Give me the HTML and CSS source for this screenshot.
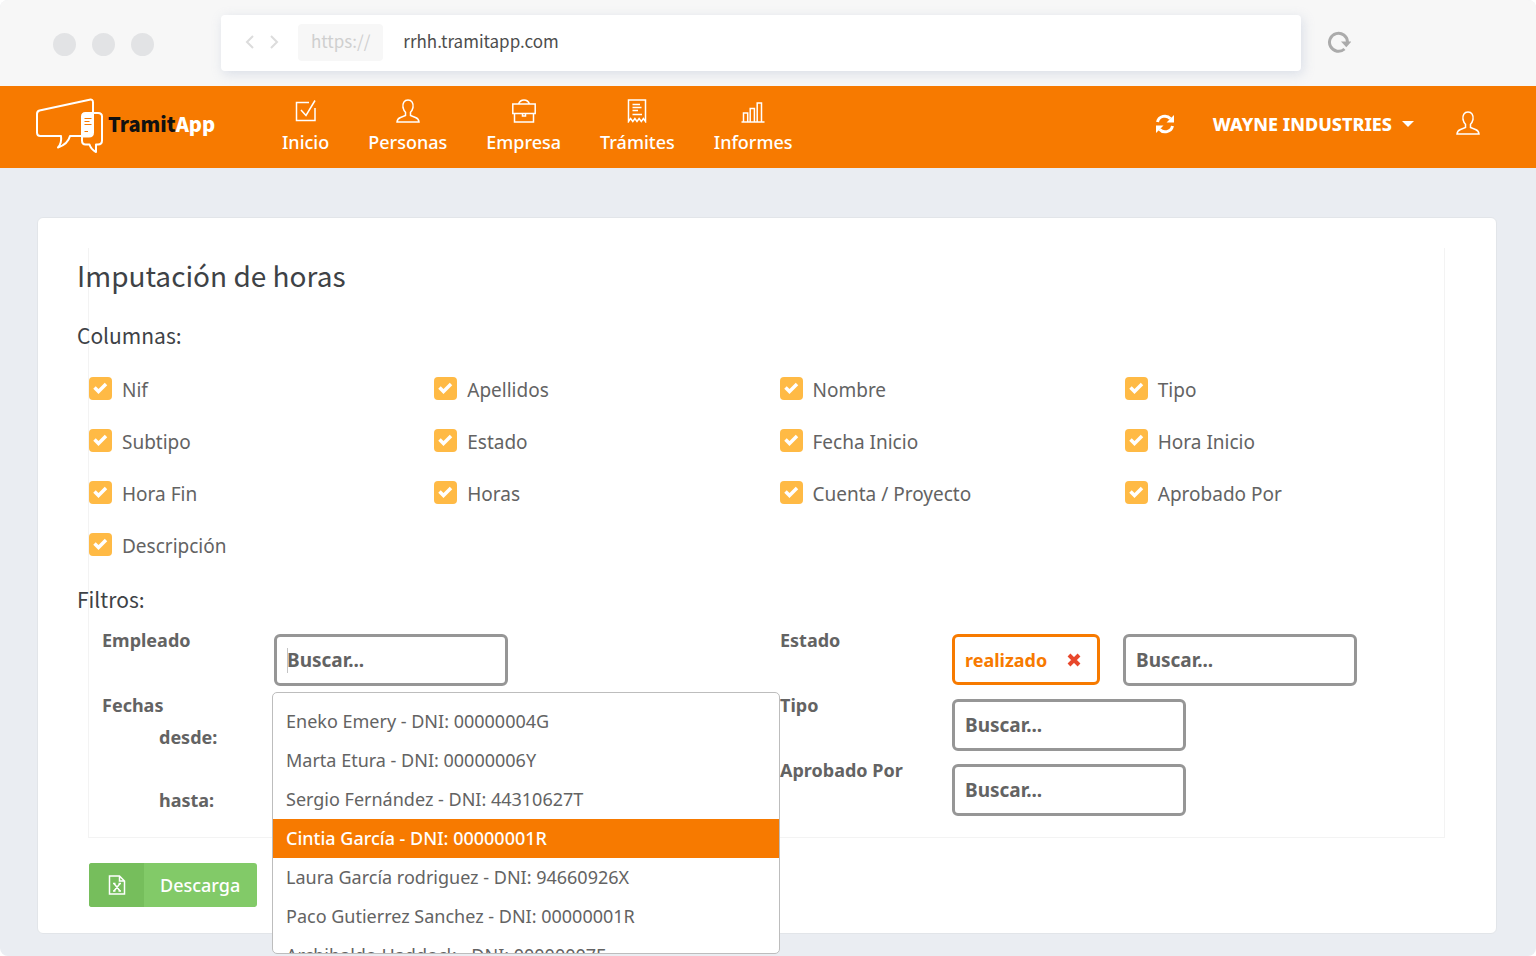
FILE: index.html
```html
<!DOCTYPE html>
<html lang="es">
<head>
    <meta charset="UTF-8">
    <meta name="viewport" content="width=device-width, initial-scale=1.0">
    <title>TramitApp - Imputación de horas</title>
    <link rel="stylesheet" href="styles.css">
</head>
<body>

<div class="page">
    <div class="browser">
        <div class="dots"><span></span><span></span><span></span></div>
        <div class="address">
            <svg class="arrows" viewBox="0 0 34 14"><path d="M8 1L2 7l6 6M26 1l6 6-6 6"/></svg>
            <span class="protocol">https://</span>
            <span class="url">rrhh.tramitapp.com</span>
        </div>
        <svg class="reload" viewBox="0 0 24 24"><path class="ring" d="M17.500 19A9 9 0 1 1 20.500 12"/><path class="tip" d="M14 11.500h10.500l-5.200 5.800z"/></svg>
    </div>

    <header class="navbar">
        <a href="#" class="logo">
            <svg viewBox="0 0 68 56">
                <path d="M58 14V4.500Q58 1 54.500 1.700L4.500 12.500Q2 13.200 2 16V34.500Q2 38 5.500 38H26Q27 45 23 49.500Q33 46 35 38H47"/>
                <path class="fill" d="M50.500 15H58V34.500Q58 38.500 54 38.500H47V18.500Q47 15 50.500 15z"/>
                <path d="M58 15H63Q67 15 67 18.500V42.500Q67 46.500 63 46.500H61V54Q56 51.500 54.500 46.500H50.500Q47 46.500 47 42.500V38"/>
                <path class="lines" d="M49.500 20.500H56.500M49.500 23.500H54.500M49.500 26.500H56.500M49.500 33.500H53"/>
            </svg>
            <span class="brand">Tramit<b>App</b></span>
        </a>
        <nav class="menu">
            <a href="#">
                <svg viewBox="0 0 24 24"><path d="M15 3.500H2.500v18h18.500V9M7 11l5 5.500L21 1.500"/></svg>
                Inicio
            </a>
            <a href="#">
                <svg viewBox="0 0 24 24"><path d="M9.500 16.500v-3.200C8 12 7.500 10.500 7 8.500c-.6-4.500 1.200-7.500 5-7.500S17.600 4 17 8.500c-.5 2-1 3.500-2.500 4.800v3.200l5 2c2.500 1 3.300 2 3.500 4.500H1c.2-2.500 1-3.500 3.500-4.500z"/></svg>
                Personas
            </a>
            <a href="#">
                <svg viewBox="0 0 24 24"><path d="M.8 5h22.400v9.500H.8zM2.500 14.500V23h19v-8.500M6.500 5Q8 1 12 1t5.500 4M10.500 15v2h3v-2"/></svg>
                Empresa
            </a>
            <a href="#">
                <svg viewBox="0 0 24 24"><path d="M3.500 22.500V1h17v21.500l-2.100-3-2.100 3-2.200-3-2.100 3-2.100-3-2.100 3-2.200-3zM7.500 5.500H15M7.500 8.500h9M7.500 11.500H13M7.500 15.500H17"/></svg>
                Trámites
            </a>
            <a href="#">
                <svg viewBox="0 0 24 24"><path d="M.5 23h23M2.500 23v-9h4.200v9M9.200 23V9.500h4.200V23M16.200 23V4h4.300v19"/></svg>
                Informes
            </a>
        </nav>
        <div class="account">
            <button type="button" class="sync" aria-label="Actualizar">
                <svg viewBox="0 0 20 20"><path class="arc" d="M2.500 8A7.500 7.500 0 0 1 15.500 4.800M17.500 12A7.500 7.500 0 0 1 4.500 15.200"/><path class="heads" d="M19 1v7.500h-7.500zM1 19v-7.500h7.500z"/></svg>
            </button>
            <button type="button" class="company">WAYNE INDUSTRIES</button>
            <button type="button" class="user" aria-label="Perfil">
                <svg viewBox="0 0 24 24"><path d="M9.500 16.500v-3.200C8 12 7.500 10.500 7 8.500c-.6-4.500 1.200-7.500 5-7.500S17.600 4 17 8.500c-.5 2-1 3.500-2.500 4.800v3.200l5 2c2.500 1 3.300 2 3.500 4.500H1c.2-2.500 1-3.500 3.500-4.500z"/></svg>
            </button>
        </div>
    </header>

    <main class="card">
        <form>
            <div class="panel">
                <h1>Imputación de horas</h1>

                <h2>Columnas:</h2>
                <div class="columns">
                    <label><input type="checkbox" checked>Nif</label>
                    <label><input type="checkbox" checked>Apellidos</label>
                    <label><input type="checkbox" checked>Nombre</label>
                    <label><input type="checkbox" checked>Tipo</label>
                    <label><input type="checkbox" checked>Subtipo</label>
                    <label><input type="checkbox" checked>Estado</label>
                    <label><input type="checkbox" checked>Fecha Inicio</label>
                    <label><input type="checkbox" checked>Hora Inicio</label>
                    <label><input type="checkbox" checked>Hora Fin</label>
                    <label><input type="checkbox" checked>Horas</label>
                    <label><input type="checkbox" checked>Cuenta / Proyecto</label>
                    <label><input type="checkbox" checked>Aprobado Por</label>
                    <label><input type="checkbox" checked>Descripción</label>
                </div>

                <h2>Filtros:</h2>
                <div class="filters">
                    <div class="left">
                        <div class="filter">
                            <label for="empleado">Empleado</label>
                            <div class="control search">
                                <input type="text" id="empleado" class="box" placeholder="Buscar...">
                                <ul class="results" role="listbox" aria-label="Empleados">
                                    <li role="option">Eneko Emery - DNI: 00000004G</li>
                                    <li role="option">Marta Etura - DNI: 00000006Y</li>
                                    <li role="option">Sergio Fernández - DNI: 44310627T</li>
                                    <li role="option" class="active" aria-selected="true">Cintia García - DNI: 00000001R</li>
                                    <li role="option">Laura García rodriguez - DNI: 94660926X</li>
                                    <li role="option">Paco Gutierrez Sanchez - DNI: 00000001R</li>
                                    <li role="option">Archibaldo Haddock - DNI: 00000007F</li>
                                </ul>
                            </div>
                        </div>
                        <p class="group">Fechas</p>
                        <div class="date">
                            <label for="desde">desde:</label>
                            <input type="text" id="desde">
                        </div>
                        <div class="date">
                            <label for="hasta">hasta:</label>
                            <input type="text" id="hasta">
                        </div>
                    </div>
                    <div class="right">
                        <div class="filter">
                            <label for="estado">Estado</label>
                            <div class="control">
                                <span class="tag">realizado
                                    <button type="button" aria-label="Quitar"><svg viewBox="0 0 14 14"><path d="M2 2l10 10M12 2L2 12"/></svg></button>
                                </span>
                                <input type="text" id="estado" class="box" placeholder="Buscar...">
                            </div>
                        </div>
                        <div class="filter">
                            <label for="tipo">Tipo</label>
                            <div class="control">
                                <input type="text" id="tipo" class="box" placeholder="Buscar...">
                            </div>
                        </div>
                        <div class="filter">
                            <label for="aprobado">Aprobado Por</label>
                            <div class="control">
                                <input type="text" id="aprobado" class="box" placeholder="Buscar...">
                            </div>
                        </div>
                    </div>
                </div>
            </div>

            <button type="button" class="download">
                <span class="download-icon">
                    <svg viewBox="0 0 18 20"><path d="M1.500 1h10l5 5v13h-15zM11.500 1v5h5M6 8.500l6 7.500M12 8.500L6 16M5 8.500h2.500M10.500 8.500H13M5 16h2.500M10.500 16H13"/></svg>
                </span>
                <span class="download-text">Descarga</span>
            </button>
        </form>
    </main>
</div>

</body>
</html>
```

FILE: styles.css
```css
* {
    margin: 0;
    padding: 0;
    box-sizing: border-box;
}

body {
    background: #fff;
    color: #636363;
    font-family: 'Noto Sans', 'Open Sans', sans-serif;
    font-size: 18px;
    line-height: 26px;
}

button,
input {
    font: inherit;
    border: 0;
    outline: 0;
    background: transparent;
}

button {
    cursor: pointer;
}

a {
    color: inherit;
    text-decoration: none;
}

svg {
    display: block;
    fill: none;
}

.page {
    min-height: 100vh;
    background: #eaedf2;
    border-radius: 8px;
    overflow: hidden;
}

/* browser bar */
.browser {
    display: flex;
    align-items: center;
    height: 86px;
    padding: 0 185px 0 53px;
    background: #f7f7f7;
}

.dots {
    display: flex;
    gap: 16px;
    margin-right: 67px;
    padding-top: 2px;
}

.dots span {
    width: 23px;
    height: 23px;
    border-radius: 50%;
    background: #e2e3e5;
}

.address {
    flex: 1;
    display: flex;
    align-items: center;
    height: 56px;
    padding: 0 0 2px 24px;
    border-radius: 4px;
    background: #fff;
    box-shadow: 2px 3px 12px rgba(150, 165, 195, 0.3);
    font-family: 'Noto Sans CJK SC', sans-serif;
    font-size: 17px;
}

.arrows {
    width: 34px;
    height: 14px;
    margin-right: 19px;
    stroke: #dcdcdc;
    stroke-width: 2;
}

.protocol {
    padding: 4px 13px 7px;
    margin-right: 20px;
    border-radius: 4px;
    background: #f7f7f7;
    color: #cfcfcf;
}

.url {
    padding-bottom: 3px;
    color: #4d4d4d;
}

.reload {
    width: 24px;
    height: 24px;
    margin: 0 0 2px 26px;
}

.reload .ring {
    stroke: #ababab;
    stroke-width: 3;
}

.reload .tip {
    fill: #ababab;
}

/* navbar */
.navbar {
    display: flex;
    align-items: center;
    height: 82px;
    padding: 0 56px 0 35px;
    background: #f77a00;
    color: #fff;
}

.logo {
    display: flex;
    align-items: center;
    gap: 5px;
    width: 247px;
    padding-bottom: 2px;
}

.logo svg {
    width: 68px;
    height: 56px;
    stroke: #fff;
    stroke-width: 2;
    stroke-linejoin: round;
}

.logo .fill {
    fill: #fff;
}

.logo .lines {
    stroke: #f77a00;
    stroke-width: 1;
}

.brand {
    padding-bottom: 4px;
    font-family: 'Noto Sans CJK SC', sans-serif;
    font-size: 20px;
    font-weight: 900;
    color: #111;
}

.brand b {
    font-weight: 900;
    color: #fff;
}

.menu {
    display: flex;
    gap: 39px;
    padding-bottom: 1px;
    font-weight: 500;
}

.menu a {
    display: flex;
    flex-direction: column;
    align-items: center;
    gap: 6px;
}

.menu svg,
.user svg {
    width: 24px;
    height: 24px;
    stroke: #fff;
    stroke-width: 1.5;
}

.account {
    display: flex;
    align-items: center;
    margin-left: auto;
    padding-bottom: 6px;
}

.account button {
    color: #fff;
}

.sync svg {
    width: 20px;
    height: 20px;
}

.sync .arc {
    stroke: #fff;
    stroke-width: 3;
}

.sync .heads {
    fill: #fff;
}

.account .user {
    padding-bottom: 3px;
}

.company {
    display: flex;
    align-items: center;
    gap: 10px;
    margin: 0 42px 0 38px;
    font-weight: 800;
}

.company::after {
    content: '';
    border: 6px solid transparent;
    border-top-color: #fff;
    border-bottom: 0;
}

/* card */
.card {
    margin: 49px 39px 22px 37px;
    padding: 30px 26px 26px 51px;
    border: 1px solid #e2e5e9;
    border-radius: 6px;
    background: #fff;
}

.panel {
    margin: 0 25px 25px -1px;
    padding: 7px 0 12px;
    border: 1px solid #f3f3f3;
    border-top: 0;
}

h1,
h2 {
    margin-left: -12px;
    color: #3e4246;
    font-family: 'Noto Sans CJK SC', sans-serif;
    font-weight: 400;
}

h1 {
    font-size: 28px;
    line-height: 40px;
}

h2 {
    font-size: 21px;
    line-height: 32px;
}

h1 + h2 {
    margin-top: 24px;
}

.columns {
    display: grid;
    grid-template-columns: repeat(4, 1fr);
    grid-auto-rows: 52px;
    margin: 12px -26px 12px 0;
    font-size: 19px;
}

.columns label {
    display: flex;
    align-items: center;
    gap: 10px;
    padding-top: 2px;
}

.columns input {
    appearance: none;
    width: 23px;
    height: 23px;
    margin-bottom: 4px;
    border-radius: 4px;
    background: #ffba45;
}

.columns input:checked {
    background: #ffba45 url("data:image/svg+xml,%3Csvg xmlns='http://www.w3.org/2000/svg' viewBox='0 0 23 23'%3E%3Cpath d='M5.500 10.500l4 4 7.500-7.500' fill='none' stroke='white' stroke-width='3.500'/%3E%3C/svg%3E");
}

.filters {
    display: grid;
    grid-template-columns: 1fr 1fr;
    margin: 12px -27px 0 0;
    font-weight: 700;
}

.left {
    padding-left: 13px;
}

.filter {
    display: flex;
    height: 65px;
}

.filter > label {
    width: 172px;
}

.control {
    display: flex;
    align-items: flex-start;
    gap: 23px;
    padding-top: 7px;
}

.box {
    width: 234px;
    height: 52px;
    padding: 0 10px 1px;
    border: 3px solid #969696;
    border-radius: 6px;
    color: #636363;
    font-size: 19px;
}

.box::placeholder {
    color: #636363;
    opacity: 1;
}

.search {
    position: relative;
}

/* text cursor */
.search::before {
    content: '';
    position: absolute;
    left: 13px;
    top: 21px;
    width: 1px;
    height: 25px;
    background: #c4c4c4;
}

.results {
    position: absolute;
    top: 65px;
    left: -2px;
    z-index: 1;
    width: 508px;
    height: 262px;
    padding-top: 9px;
    border: 1px solid #bdbdbd;
    border-radius: 5px;
    background: #fff;
    font-weight: 400;
    list-style: none;
    overflow: hidden;
}

.results li {
    padding: 0 13px;
    line-height: 39px;
    white-space: nowrap;
    cursor: pointer;
}

.results .active {
    background: #f77a00;
    color: #fff;
    font-weight: 500;
}

.date {
    display: flex;
    margin: 6px 0 25px 57px;
}

.date + .date {
    margin: 0 0 0 57px;
}

.date label {
    width: 115px;
}

.date input {
    width: 234px;
    height: 38px;
    border: 3px solid #969696;
    border-radius: 6px;
}

.tag {
    display: flex;
    align-items: center;
    gap: 20px;
    width: 148px;
    height: 51px;
    padding-left: 10px;
    border: 3px solid #f77a00;
    border-radius: 6px;
    color: #f77a00;
}

.tag svg {
    width: 14px;
    height: 14px;
    stroke: #e8472b;
    stroke-width: 4;
}

.download {
    display: flex;
    height: 44px;
    border-radius: 3px;
    background: #82ca68;
    color: #fff;
    font-weight: 500;
    line-height: 44px;
    overflow: hidden;
}

.download-icon {
    display: flex;
    align-items: center;
    justify-content: center;
    width: 55px;
    background: #76be5c;
}

.download-icon svg {
    width: 18px;
    height: 20px;
    stroke: #fff;
    stroke-width: 1.5;
}

.download-text {
    padding: 0 17px 0 16px;
}
```
